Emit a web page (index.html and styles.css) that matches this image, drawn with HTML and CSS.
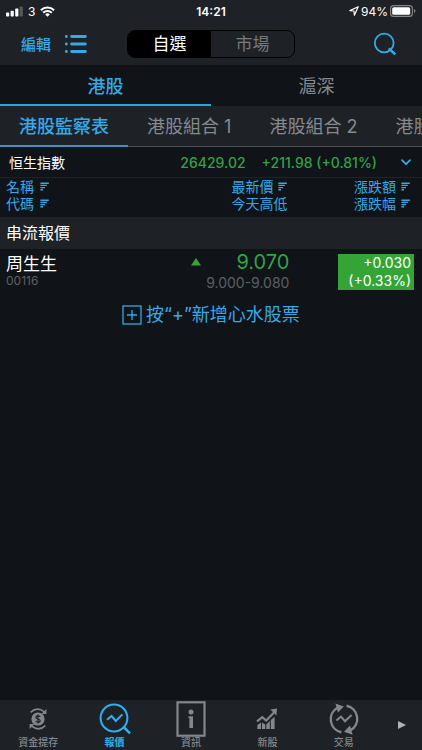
FILE: index.html
```html
<!DOCTYPE html>
<html lang="zh-Hant">
<head>
<meta charset="utf-8">
<meta name="viewport" content="width=device-width, initial-scale=1">
<title>報價</title>
<link rel="stylesheet" href="styles.css">
</head>
<body>
<header class="top">
  <div class="status">
    <div class="status-side">
      <svg class="signal" width="17" height="11" viewBox="0 0 17 11" aria-hidden="true">
        <rect x="0" y="6.5" width="3.2" height="4" rx="0.8"/><rect x="4.6" y="4.8" width="3.2" height="5.7" rx="0.8"/><rect x="9.2" y="2.6" width="3.2" height="7.9" rx="0.8"/><rect x="13.6" y="0.4" width="3.2" height="10.1" rx="0.8" opacity=".25"/>
      </svg>
      <span class="carrier">3</span>
      <svg width="15" height="11" viewBox="0 0 15 11" fill="none" stroke="#fff" stroke-width="2" aria-hidden="true">
        <path d="M.9 4.2A9.5 9.5 0 0 1 14.1 4.2M3.2 6.7A6.1 6.1 0 0 1 11.8 6.7"/><path d="M5.2 8.4A3.3 3.3 0 0 1 9.8 8.4L7.5 10.8z" fill="#fff" stroke="none"/>
      </svg>
    </div>
    <time class="clock">14:21</time>
    <div class="status-side status-right">
      <svg width="10" height="10" viewBox="0 0 10 10" fill="none" stroke="#fff" stroke-width="1.2" stroke-linejoin="round" aria-hidden="true"><path d="M9.2.8L.9 4.6L5 5L5.4 9.2z"/></svg>
      <span class="battery-text">94%</span>
      <svg width="26" height="12" viewBox="0 0 26 12" aria-hidden="true"><rect x=".6" y=".6" width="21.8" height="10.8" rx="3" fill="none" stroke="#85888b" stroke-width="1.1"/><rect x="2.2" y="2.2" width="18" height="7.6" rx="1.6" fill="#fff"/><path d="M24 4v4q1.4-.6 1.4-2T24 4" fill="#85888b"/></svg>
    </div>
  </div>
  <div class="toolbar">
    <div class="tools">
      <button class="edit" type="button">編輯</button>
      <button class="list" type="button" aria-label="列表">
        <svg width="24" height="20" viewBox="0 0 24 20" fill="none" stroke="currentColor" stroke-width="2.8" stroke-linecap="round"><path d="M7.6 2.5H21.4M7.6 10H21.4M7.6 17.5H21.4M2.3 2.5h.1M2.3 10h.1M2.3 17.5h.1"/></svg>
      </button>
    </div>
    <div class="segment">
      <button class="segment-item is-on" type="button">自選</button>
      <button class="segment-item" type="button">市場</button>
    </div>
    <button class="search" type="button" aria-label="搜尋">
      <svg width="24" height="24" viewBox="0 0 24 24" fill="none" stroke="currentColor" stroke-width="1.8"><circle cx="11.2" cy="11" r="9.4"/><path d="M15.8 16.4L22.2 22.4" stroke-width="2.6"/></svg>
    </button>
  </div>
</header>
<nav class="markets">
  <a class="market is-on" href="#hk">港股</a>
  <a class="market" href="#cn">滬深</a>
</nav>
<nav class="groups">
  <a class="group is-on" href="#g0">港股監察表</a>
  <a class="group" href="#g1">港股組合 1</a>
  <a class="group" href="#g2">港股組合 2</a>
  <a class="group" href="#g3">港股組合 3</a>
</nav>
<main class="content">
  <button class="index" type="button">
    <span class="index-name">恒生指數</span>
    <span class="index-value">26429.02</span>
    <span class="index-value">+211.98 (+0.81%)</span>
    <svg width="10" height="7" viewBox="0 0 10 7" fill="none" stroke="#35a9e6" stroke-width="1.8" stroke-linecap="round" stroke-linejoin="round" aria-hidden="true"><path d="M1 1.2L5 5.2L9 1.2"/></svg>
  </button>
  <table class="quotes">
    <colgroup><col><col class="col-price"><col class="col-change"></colgroup>
    <thead>
      <tr>
        <th>
          <button class="sort" type="button">名稱<svg viewBox="0 0 9 9"><path d="M.4 1.2H8.8M.4 3.4H6.8M.4 5.6H5M.4 7.8H3"/></svg></button>
          <button class="sort" type="button">代碼<svg viewBox="0 0 9 9"><path d="M.4 1.2H8.8M.4 3.4H6.8M.4 5.6H5M.4 7.8H3"/></svg></button>
        </th>
        <th class="right">
          <button class="sort" type="button">最新價<svg viewBox="0 0 9 9"><path d="M.4 1.2H8.8M.4 3.4H6.8M.4 5.6H5M.4 7.8H3"/></svg></button>
          <span class="sort">今天高低</span>
        </th>
        <th class="right">
          <button class="sort" type="button">漲跌額<svg viewBox="0 0 9 9"><path d="M.4 1.2H8.8M.4 3.4H6.8M.4 5.6H5M.4 7.8H3"/></svg></button>
          <button class="sort" type="button">漲跌幅<svg viewBox="0 0 9 9"><path d="M.4 1.2H8.8M.4 3.4H6.8M.4 5.6H5M.4 7.8H3"/></svg></button>
        </th>
      </tr>
    </thead>
    <tbody>
      <tr><th class="section" colspan="3">串流報價</th></tr>
      <tr>
        <td><div class="name">周生生</div><div class="code">00116</div></td>
        <td class="right">
          <div class="price"><svg width="12" height="8" viewBox="0 0 12 8" fill="#35a437" aria-hidden="true"><path d="M6 0L11 7.5H1z"/></svg><span>9.070</span></div>
          <div class="range">9.000-9.080</div>
        </td>
        <td><div class="change">+0.030<br>(+0.33%)</div></td>
      </tr>
    </tbody>
  </table>
  <button class="add" type="button">
    <svg width="20" height="20" viewBox="0 0 20 20" fill="none" stroke="currentColor" stroke-width="1.3" aria-hidden="true"><rect x="1" y="1" width="18" height="18"/><path d="M10 5V15M5 10H15"/></svg>
    按“+”新增心水股票
  </button>
</main>
<nav class="tabbar">
  <a class="tab" href="#fund">
    <svg width="20" height="24" viewBox="0 0 20 24" fill="none" stroke="currentColor" stroke-width="1.5"><circle cx="10" cy="12" r="6.6" fill="currentColor" stroke="none"/><path d="M12.2 9.9Q11.8 8.8 10 8.8Q7.9 8.8 7.9 10.3Q7.9 11.5 10 12Q12.2 12.5 12.2 13.8Q12.2 15.2 10 15.2Q8 15.2 7.7 13.9M10 7.6V16.5" stroke="#1e2226" stroke-width="1.2"/><path d="M2.6 5.4Q9 -.8 16.4 4.8M17.4 18.6Q11 24.8 3.6 19.2"/><path d="M18.4 2V7H13.4zM1.6 22V17H6.6z" fill="currentColor" stroke="none"/></svg>
    <span>資金提存</span>
  </a>
  <a class="tab is-on" href="#quote">
    <svg width="32" height="32" viewBox="0 0 32 32" fill="none" stroke="currentColor" stroke-width="2"><circle cx="15" cy="15" r="13.4"/><path d="M24.2 23.6L31 30.4" stroke-width="2.6"/><path d="M8 16.8L12.6 13L16.8 18L23.4 11.4"/></svg>
    <span>報價</span>
  </a>
  <a class="tab" href="#news">
    <svg width="30" height="36" viewBox="0 0 30 36" fill="none" stroke="currentColor"><rect x="1.5" y="1.3" width="27" height="33.4" stroke-width="2.2"/><circle cx="15" cy="11" r="2.5" fill="currentColor" stroke="none"/><path d="M12.4 16.2H15" stroke-width="1.6"/><path d="M15.2 15.4V27" stroke-width="3.6"/></svg>
    <span>資訊</span>
  </a>
  <a class="tab" href="#ipo">
    <svg width="22" height="22" viewBox="0 0 22 22" fill="currentColor"><path d="M1.4 17L5 14.6V21H1.4zM6 14.6L9.3 16.5V21H6zM10.3 16.4L13.8 13V21H10.3zM14.8 12L18.6 8.8V21H14.8z"/><path d="M1 13.4L6.3 9.2L10.2 12.6L18 4.6" fill="none" stroke="currentColor" stroke-width="2.2"/><path d="M14.4 1.4L21 .6L20.4 7.4z"/></svg>
    <span>新股</span>
  </a>
  <a class="tab" href="#trade">
    <svg width="32" height="34" viewBox="0 0 32 34" fill="none" stroke="currentColor" stroke-width="2.4"><path d="M13.4 30.2A13.2 13.2 0 0 1 9.4 5.8M18.6 3.8A13.2 13.2 0 0 1 22.6 28.2"/><path d="M7.4 1.4L15.8 4.4L10 10.4zM24.6 32.8L16 29.8L22 23.4z" fill="currentColor" stroke="none"/><path d="M8.4 18.6L13 14.6L17 19.2L23.6 13" stroke-width="2"/></svg>
    <span>交易</span>
  </a>
  <button class="more" type="button" aria-label="更多"><svg width="8" height="8" viewBox="0 0 8 8" fill="#aeb2ba"><path d="M0 0L8 4L0 8z"/></svg></button>
</nav>
</body>
</html>
```
FILE: styles.css
```css
* {
  box-sizing: border-box;
}

body {
  margin: 0;
  min-height: 100vh;
  display: flex;
  flex-direction: column;
  background: #101318;
  color: #fff;
  font-family: Inter, "Noto Sans CJK TC", sans-serif;
  font-size: 14px;
}

button {
  padding: 0;
  border: 0;
  background: none;
  color: inherit;
  font: inherit;
}

a {
  color: inherit;
  text-decoration: none;
}

svg {
  display: block;
  flex: none;
}

.top {
  background: #1e2226;
  border-bottom: 1px solid #101318;
}

.status {
  display: grid;
  grid-template-columns: 1fr auto 1fr;
  align-items: center;
  height: 22px;
  padding: 0 6px;
  font-size: 12px;
}

.status-side {
  display: flex;
  align-items: center;
  gap: 5px;
}

.status-right {
  justify-content: flex-end;
  gap: 2px;
}

.signal {
  fill: #fff;
}

.clock {
  font-weight: 600;
}

.toolbar {
  display: grid;
  grid-template-columns: 1fr 168px 1fr;
  align-items: center;
  height: 43px;
  padding: 0 21px;
  color: #35a9e6;
}

.tools {
  display: flex;
  align-items: center;
  gap: 13px;
}

.edit {
  font-size: 15px;
  font-weight: 500;
}

.segment {
  display: flex;
  height: 28px;
  border: 1px solid #000;
  border-radius: 8px;
  overflow: hidden;
}

.segment-item {
  flex: 1;
  color: #77797c;
  font-size: 17px;
  line-height: 26px;
}

.segment-item.is-on {
  background: #000;
  color: #fff;
}

.search {
  justify-self: end;
  padding-right: 4px;
}

.markets {
  display: flex;
  height: 40px;
}

.market {
  flex: 1;
  border-bottom: 2px solid transparent;
  color: #858990;
  font-size: 18px;
  line-height: 42px;
  text-align: center;
}

.market.is-on {
  border-color: #2ba4e2;
  color: #35a9e6;
  font-weight: 500;
}

.groups {
  display: flex;
  height: 41px;
  overflow: hidden;
  background: #1e2226;
  box-shadow: inset 0 -1px #4c4f53;
}

.group {
  flex: none;
  padding: 0 19px;
  border-bottom: 2px solid transparent;
  color: #858990;
  font-size: 18px;
  line-height: 42px;
}

.group.is-on {
  border-color: #3f8fc0;
  color: #35a9e6;
  font-weight: 500;
}

.content {
  flex: 1;
  display: flex;
  flex-direction: column;
}

.index {
  display: flex;
  align-items: center;
  gap: 16px;
  height: 31px;
  padding: 0 11px 0 9px;
  border-bottom: 1px solid #1e2226;
  text-align: left;
}

.index-name {
  flex: 1;
}

.index-value {
  color: #2fa347;
  font-weight: 500;
}

.index svg {
  margin-left: 8px;
}

.quotes {
  width: 100%;
  border-collapse: collapse;
  table-layout: fixed;
}

.col-price {
  width: 32%;
}

.col-change {
  width: 30%;
}

.quotes th,
.quotes td {
  padding: 0 6px;
  text-align: left;
  vertical-align: top;
  font-weight: 400;
}

.quotes thead th {
  height: 39px;
}

.quotes .right {
  text-align: right;
}

.quotes thead .right {
  padding-right: 8px;
}

.quotes thead .right:last-child {
  padding-right: 12px;
}

.sort {
  display: flex;
  align-items: center;
  gap: 6px;
  color: #35a9e6;
  line-height: 17px;
}

.right .sort {
  gap: 5px;
  margin-left: auto;
  width: fit-content;
}

.sort svg {
  width: 9px;
  height: 9px;
  fill: none;
  stroke: currentColor;
  stroke-width: 1.4;
}

.quotes .section {
  height: 32px;
  background: #1e2226;
  font-size: 16px;
  line-height: 32px;
}

.name {
  padding-top: 4px;
  font-size: 17px;
  line-height: 22px;
}

.code {
  color: #5c6066;
  font-size: 12px;
  line-height: 12px;
}

.price {
  display: flex;
  align-items: center;
  justify-content: space-between;
  padding-left: 24px;
  color: #2fa347;
  font-size: 20px;
  line-height: 26px;
}

.range {
  color: #5c6066;
  line-height: 16px;
}

.change {
  width: 76px;
  margin: 5px 2px 0 auto;
  padding-right: 3px;
  background: #35a437;
  text-align: right;
  line-height: 18px;
}

.add {
  display: flex;
  align-items: center;
  align-self: center;
  gap: 4px;
  margin-top: 9px;
  color: #35a9e6;
  font-size: 18px;
  line-height: 30px;
}

.tabbar {
  display: grid;
  grid-template-columns: repeat(5, 1fr) 40px;
  height: 50px;
  background: #1e2226;
}

.tab {
  display: grid;
  grid-template-rows: 37px 10px;
  place-items: center;
  color: #85878a;
  font-size: 10px;
  font-weight: 500;
  line-height: 10px;
}

.tab.is-on {
  color: #2bb0f5;
  font-weight: 700;
}

.more {
  display: grid;
  place-items: center;
}
```
